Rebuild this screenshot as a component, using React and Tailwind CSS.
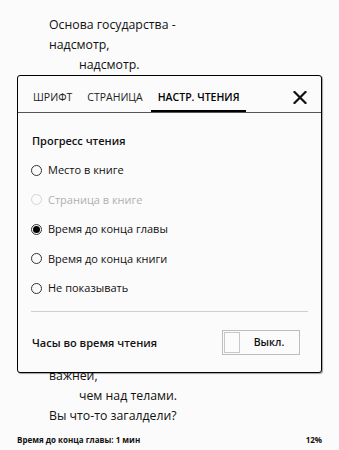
import React, { useState } from 'react';

const font = { fontFamily: '"Open Sans", "Noto Sans", sans-serif' };

const options = [
  { label: 'Место в книге', disabled: false },
  { label: 'Страница в книге', disabled: true },
  { label: 'Время до конца главы', disabled: false },
  { label: 'Время до конца книги', disabled: false },
  { label: 'Не показывать', disabled: false },
];

const Radio = ({ checked, disabled }) => (
  <span
    className={`flex h-[11px] w-[11px] shrink-0 items-center justify-center rounded-full border-[1.3px] ${
      disabled ? 'border-[#d4d4d4]' : 'border-[#333]'
    }`}
  >
    {checked && <span className="h-[7px] w-[7px] rounded-full bg-black" />}
  </span>
);

const SettingsDialog = () => {
  const [selected, setSelected] = useState(2);
  const tabs = ['ШРИФТ', 'СТРАНИЦА', 'НАСТР. ЧТЕНИЯ'];

  return (
    <div className="absolute left-[17px] top-[75px] flex h-[298px] w-[305px] flex-col rounded-[3px] border-[1.5px] border-black bg-[#fbfbfb] shadow-[1px_1px_1px_rgba(0,0,0,0.35)]">
      <div className="flex h-[37px] shrink-0 items-end border-b border-[#555] pl-[8px] pr-[14px]">
        <div className="flex gap-[1px]">
          {tabs.map((t, i) => (
            <div
              key={t}
              className={`px-[7px] pb-[6px] text-[10.5px] leading-[14px] ${
                i === 2 ? 'border-b-[2.5px] border-black font-semibold text-black' : 'border-b-[2.5px] border-transparent text-[#222]'
              }`}
            >
              {t}
            </div>
          ))}
        </div>
        <svg className="mb-[8px] ml-auto" width="14" height="13" viewBox="0 0 14 13">
          <path d="M1.5 1 L12.5 12 M12.5 1 L1.5 12" stroke="#111" strokeWidth="2.2" strokeLinecap="square" />
        </svg>
      </div>

      <div className="flex flex-1 flex-col px-[13px]">
        <div className="mt-[20px] pl-[1px] text-[11px] font-semibold leading-[16px] text-[#111]">Прогресс чтения</div>
        <div className="mt-[13px] flex flex-col gap-[13.6px]">
          {options.map((o, i) => (
            <button
              key={o.label}
              type="button"
              disabled={o.disabled}
              onClick={() => setSelected(i)}
              className="flex h-[16px] items-center gap-[6px] text-left"
            >
              <Radio checked={selected === i} disabled={o.disabled} />
              <span className={`text-[11px] leading-[16px] ${o.disabled ? 'text-[#b0b0b0]' : 'text-[#111]'}`}>
                {o.label}
              </span>
            </button>
          ))}
        </div>
        <div className="mt-[15px] h-px bg-[#cfcfcf]" />
        <div className="mt-[18px] flex items-center justify-between pr-[8px]">
          <span className="pl-[1px] text-[11px] font-semibold text-[#111]">Часы во время чтения</span>
          <div className="flex h-[25px] w-[78px] items-center border border-[#bdbdbd] p-[1px]">
            <div className="h-full w-[16px] border border-[#c8c8c8]" />
            <span className="flex-1 text-center text-[10.5px] font-semibold text-[#111]">Выкл.</span>
          </div>
        </div>
      </div>
    </div>
  );
};

export default function App() {
  return (
    <div style={font} className="relative flex h-[450px] w-[339px] flex-col overflow-hidden bg-[#fbfbfb] text-[#111]">
      <div className="pt-[15px] text-[12.3px] leading-[20px]">
        <div className="pl-[49px]">Основа государства -</div>
        <div className="pl-[49px]">надсмотр,</div>
        <div className="pl-[79px]">надсмотр.</div>
      </div>
      <div className="flex-1" />
      <div className="text-[12.3px] leading-[20px]">
        <div className="pl-[49px]">важней,</div>
        <div className="pl-[79px]">чем над телами.</div>
        <div className="pl-[49px]">Вы что-то загалдели?</div>
      </div>
      <div className="flex h-[24px] items-center justify-between px-[17px] pt-[4px] text-[8px] font-bold leading-[12px]">
        <span>Время до конца главы: 1 мин</span>
        <span>12%</span>
      </div>
      <SettingsDialog />
    </div>
  );
}
